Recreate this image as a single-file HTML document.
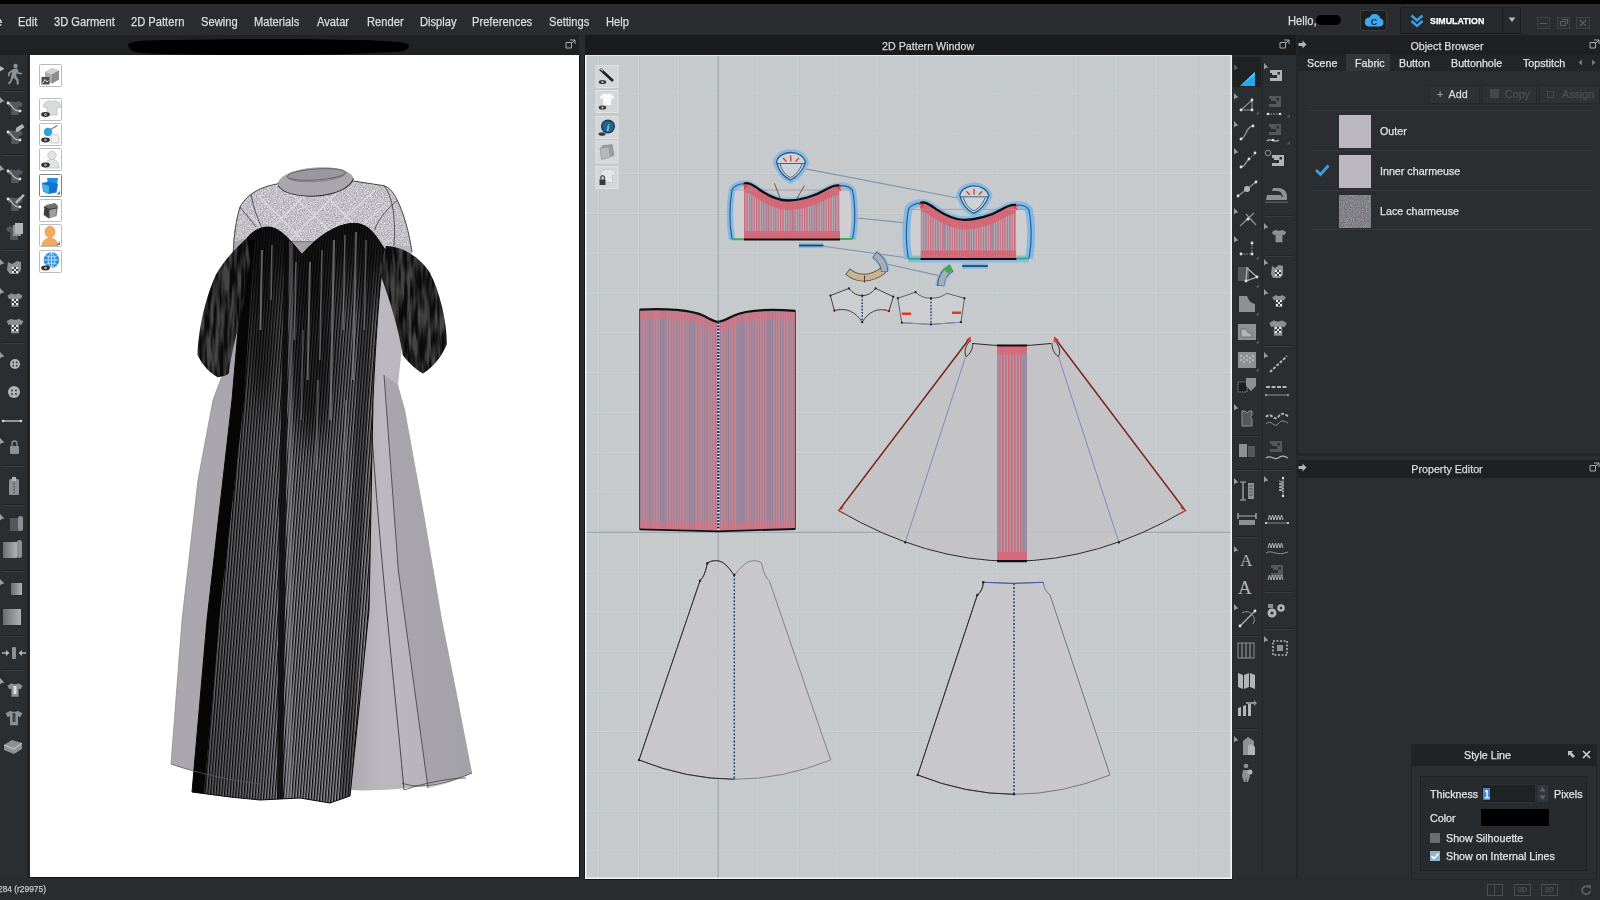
<!DOCTYPE html>
<html><head><meta charset="utf-8"><title>CLO</title>
<style>
*{box-sizing:border-box;margin:0;padding:0}
html,body{width:1600px;height:900px;overflow:hidden;background:#2a2d30;font-family:"Liberation Sans",sans-serif;font-size:12px;color:#dcdcdc}
#app{position:relative;width:1600px;height:900px;overflow:hidden;background:#2a2d30}
.abs{position:absolute}
.t{position:absolute;white-space:nowrap;line-height:14px;height:14px;transform:scaleX(.93);transform-origin:0 50%;-webkit-text-stroke:.25px currentColor}
.t[style*='text-align:center']{transform-origin:50% 50%}
#topblack{left:0;top:0;width:1600px;height:4px;background:#000}
#menubar{left:0;top:4px;width:1600px;height:31px;background:#2a2c2f}
.mi{position:absolute;top:14.500px;white-space:nowrap;line-height:14px;color:#dedede;font-size:12px;transform:scaleX(.93);transform-origin:0 50%;-webkit-text-stroke:.25px currentColor}
#titlerow{left:0;top:35px;width:1600px;height:20px;background:#1f2123}
#lefttb{left:0;top:55px;width:27px;height:823px;background:#2b2e31}
#v3d{left:30px;top:55px;width:549px;height:822px;background:#fff;box-shadow:1px 1px 0 #111}
#v2d{left:585px;top:55px;width:647px;height:824px;background:#c6cacc;box-shadow:0 1px 0 #111,1px 0 0 #111,-1px 0 0 #161718}
#status{left:0;top:880px;width:1600px;height:20px;background:#2a2d30}
.vb{position:absolute;width:23px;height:23px;border:1px solid #bcbcbc;background:#fdfdfd;border-radius:1.500px}
.vb2{position:absolute;width:22px;height:22px;border:1px solid #e6e9ea;background:#d6dadc}
</style></head><body>
<div id="app">
<div id="topblack" class="abs"></div>
<div id="menubar" class="abs"></div>
<div id="titlerow" class="abs"></div><div class="abs" style="left:579px;top:35px;width:6px;height:20px;background:#2a2d30"></div><div class="abs" style="left:585px;top:35px;width:711px;height:20px;background:#1a1b1d"></div>
<div id="lefttb" class="abs"></div>
<div id="v3d" class="abs"></div>
<div id="v2d" class="abs"></div>
<div id="status" class="abs"></div>
<div class="mi" style="left:-4.500px">e</div>
<div class="mi" style="left:18px">Edit</div>
<div class="mi" style="left:54px">3D Garment</div>
<div class="mi" style="left:131px">2D Pattern</div>
<div class="mi" style="left:201px">Sewing</div>
<div class="mi" style="left:254px">Materials</div>
<div class="mi" style="left:317px">Avatar</div>
<div class="mi" style="left:367px">Render</div>
<div class="mi" style="left:420px">Display</div>
<div class="mi" style="left:472px">Preferences</div>
<div class="mi" style="left:549px">Settings</div>
<div class="mi" style="left:606px">Help</div>
<div class="mi" style="left:1288px;top:13.500px">Hello,</div>
<div class="abs" style="left:1316px;top:15px;width:25px;height:10px;background:#000;border-radius:5px"></div>
<!-- cloud button -->
<div class="abs" style="left:1360px;top:10px;width:27px;height:21px;background:#1c1e20;border:1px solid #3a3d40;border-radius:3px"></div>
<svg class="abs" style="left:1363px;top:12px" width="22" height="17" viewBox="0 0 22 17"><path d="M5.5 14.5h11a4 4 0 0 0 .8-7.9A5.6 5.6 0 0 0 6.600 5.400 4.600 4.600 0 0 0 5.500 14.500z" fill="#3fa9f0"/><text x="11" y="12.500" font-family="Liberation Sans,sans-serif" font-size="9" font-weight="bold" fill="#1c2a38" text-anchor="middle">C</text></svg>
<!-- simulation button -->
<div class="abs" style="left:1400px;top:7px;width:121px;height:27px;background:#26292c;border:1px solid #1b1d1f;border-radius:2px"></div>
<div class="abs" style="left:1502px;top:8px;width:1px;height:25px;background:#1b1d1f"></div>
<svg class="abs" style="left:1410px;top:14px" width="14" height="14" viewBox="0 0 14 14"><path d="M1.5 1.500 7 6.500 12.500 1.500M1.500 7 7 12 12.500 7" fill="none" stroke="#3fa0e8" stroke-width="2.400"/></svg>
<div class="mi" style="left:1430px;top:13.500px;font-weight:bold;font-size:9.500px;color:#fff;letter-spacing:0px">SIMULATION</div>
<svg class="abs" style="left:1508px;top:17px" width="8" height="6"><path d="M0.500 0.500h7L4 5z" fill="#b8b8b8"/></svg>
<!-- window buttons -->
<div class="abs" style="left:1537px;top:17px;width:13px;height:12px;border:1px solid #3f4245;background:#2d3033"></div>
<div class="abs" style="left:1557px;top:17px;width:13px;height:12px;border:1px solid #3f4245;background:#2d3033"></div>
<div class="abs" style="left:1576px;top:17px;width:14px;height:12px;border:1px solid #3f4245;background:#2d3033"></div>
<div class="abs" style="left:1540px;top:23px;width:7px;height:1px;background:#5a5d60"></div>
<div class="abs" style="left:1560px;top:21px;width:6px;height:5px;border:1px solid #5a5d60"></div>
<div class="abs" style="left:1562px;top:19px;width:6px;height:5px;border:1px solid #5a5d60;border-left:none;border-bottom:none"></div>
<svg class="abs" style="left:1579px;top:19px" width="8" height="8"><path d="M1 1l6 6M7 1l-6 6" stroke="#5a5d60" stroke-width="1.200"/></svg>
<!-- 3D window title redaction -->
<svg class="abs" style="left:120px;top:35px;filter:blur(.6px)" width="300" height="20"><path d="M10 8c8-3 30-3 50-3l60-1 60 0 50 1c20 0 50 1 58 4 3 4-2 7-12 8l-50 2-50 1-70 0-60-1c-15 0-30-1-34-3-4-3-5-6-2-8z" fill="#000"/></svg>
<svg class="abs" style="left:565px;top:39px" width="11" height="10"><path d="M1 3.500h5.500v5.500h-5.500zM5 1h5v4M10 1l-4 4" fill="none" stroke="#aaa" stroke-width="1"/></svg>
<div class="t" style="left:882px;top:39px;color:#d8d8d8;font-size:11.500px">2D Pattern Window</div>
<svg class="abs" style="left:1279px;top:39px" width="11" height="10"><path d="M1 3.500h5.500v5.500h-5.500zM5 1h5v4M10 1l-4 4" fill="none" stroke="#aaa" stroke-width="1"/></svg>

<svg class="abs" style="left:0;top:55px" width="30" height="823" viewBox="0 55 30 823">
<rect x="27" y="55" width="3" height="823" fill="#212325"/>
<path d="M0.0 66.0l4.500 2.800-4.500 2.800z" fill="#b8babc"/>
<g fill="#8e9194"><circle cx="15.500" cy="66" r="2.200"/><path d="M13 69l4.500-.5 1.200 4 3.300.3v1.500l-4.500-.2-.8-1.500-.5 3.500 2.300 3.500.3 4.800h-2l-.5-4-2.800-3-1.800 4-2.500 3-1.400-1 2.600-3.200 1.300-6 .3-2.200-2 1.500-.4 2.800h-1.600l.3-3.800z"/></g>
<rect x="2.0" y="91.0" width="22.0" height="1" fill="#3a3d40"/><rect x="2.0" y="90.0" width="22.0" height="1" fill="#202224"/>
<path d="M0.0 97.0l0 6.500 1.800-1.600 2.600-.3z" fill="#9a9da0"/><path transform="translate(15.0,108.0) scale(1.00)" d="M-8-4.500l4.500-2.500c1.500 1.500 5.500 1.500 7 0l4.500 2.500-2 3.800-2.200-1v8.700h-7.600v-8.700l-2.200 1z" fill="#55585b"/><path d="M8 103.0c4 0 4 9 12 8" fill="none" stroke="#b2b4b6" stroke-width="1.300"/><circle cx="8.0" cy="103.0" r="1.4" fill="#e0e0e0"/><circle cx="20.0" cy="111.0" r="1.4" fill="#e0e0e0"/>
<path transform="translate(15.0,137.0) scale(1.00)" d="M-8-4.500l4.500-2.500c1.500 1.500 5.500 1.500 7 0l4.500 2.500-2 3.800-2.200-1v8.700h-7.600v-8.700l-2.200 1z" fill="#55585b"/><path d="M8 132.0c4 0 4 9 12 8" fill="none" stroke="#b2b4b6" stroke-width="1.300"/><circle cx="8.0" cy="132.0" r="1.4" fill="#e0e0e0"/><circle cx="20.0" cy="140.0" r="1.4" fill="#e0e0e0"/><path d="M16 128l6-4 2.500 3-6 4.500-3 .5z" fill="#b2b4b6"/>
<rect x="2.0" y="155.0" width="22.0" height="1" fill="#3a3d40"/><rect x="2.0" y="154.0" width="22.0" height="1" fill="#202224"/>
<path d="M0.0 165.0l0 6.500 1.800-1.600 2.600-.3z" fill="#9a9da0"/><path transform="translate(15.0,176.0) scale(1.00)" d="M-8-4.500l4.500-2.500c1.500 1.500 5.500 1.500 7 0l4.500 2.500-2 3.800-2.200-1v8.700h-7.600v-8.700l-2.200 1z" fill="#55585b"/><path d="M8 171.0c4 0 4 9 12 8" fill="none" stroke="#b2b4b6" stroke-width="1.300"/><circle cx="8.0" cy="171.0" r="1.4" fill="#e0e0e0"/><circle cx="20.0" cy="179.0" r="1.4" fill="#e0e0e0"/>
<path transform="translate(15.0,204.0) scale(1.00)" d="M-8-4.500l4.500-2.500c1.500 1.500 5.500 1.500 7 0l4.500 2.500-2 3.800-2.200-1v8.700h-7.600v-8.700l-2.200 1z" fill="#55585b"/><path d="M8 199.0c4 0 4 9 12 8" fill="none" stroke="#b2b4b6" stroke-width="1.300"/><circle cx="8.0" cy="199.0" r="1.4" fill="#e0e0e0"/><circle cx="20.0" cy="207.0" r="1.4" fill="#e0e0e0"/><path d="M15 202l8-8 1.800 1.800-8 8z" fill="#b2b4b6"/>
<path transform="translate(14.0,233.0) scale(1.00)" d="M-8-4.500l4.500-2.500c1.500 1.500 5.500 1.500 7 0l4.500 2.500-2 3.800-2.200-1v8.700h-7.600v-8.700l-2.200 1z" fill="#55585b"/><rect x="13" y="225" width="8" height="11" fill="#8e9194"/><rect x="15" y="223" width="8" height="11" fill="#b2b4b6"/>
<rect x="2.0" y="250.0" width="22.0" height="1" fill="#3a3d40"/><rect x="2.0" y="249.0" width="22.0" height="1" fill="#202224"/>
<path d="M0.0 259.0l0 6.500 1.800-1.600 2.600-.3z" fill="#9a9da0"/><path d="M8 262l4 2 5-3 4 1v8l-3 4h-8l-3-4z" fill="#8e9194"/><rect x="12.0" y="267.0" width="2" height="2" fill="#e6e6e6"/><rect x="12.0" y="269.0" width="2" height="2" fill="#3a3d40"/><rect x="12.0" y="271.0" width="2" height="2" fill="#e6e6e6"/><rect x="14.0" y="267.0" width="2" height="2" fill="#3a3d40"/><rect x="14.0" y="269.0" width="2" height="2" fill="#e6e6e6"/><rect x="14.0" y="271.0" width="2" height="2" fill="#3a3d40"/><rect x="16.0" y="267.0" width="2" height="2" fill="#e6e6e6"/><rect x="16.0" y="269.0" width="2" height="2" fill="#3a3d40"/><rect x="16.0" y="271.0" width="2" height="2" fill="#e6e6e6"/>
<path d="M0.0 288.0l0 6.500 1.800-1.600 2.600-.3z" fill="#9a9da0"/><path transform="translate(15.0,300.0) scale(0.95)" d="M-8-4.500l4.500-2.500c1.500 1.500 5.500 1.500 7 0l4.500 2.500-2 3.800-2.200-1v8.700h-7.600v-8.700l-2.200 1z" fill="#8e9194"/><rect x="12.0" y="299.0" width="2" height="2" fill="#e6e6e6"/><rect x="12.0" y="301.0" width="2" height="2" fill="#3a3d40"/><rect x="12.0" y="303.0" width="2" height="2" fill="#e6e6e6"/><rect x="14.0" y="299.0" width="2" height="2" fill="#3a3d40"/><rect x="14.0" y="301.0" width="2" height="2" fill="#e6e6e6"/><rect x="14.0" y="303.0" width="2" height="2" fill="#3a3d40"/><rect x="16.0" y="299.0" width="2" height="2" fill="#e6e6e6"/><rect x="16.0" y="301.0" width="2" height="2" fill="#3a3d40"/><rect x="16.0" y="303.0" width="2" height="2" fill="#e6e6e6"/>
<path transform="translate(15.0,326.0) scale(1.05)" d="M-8-4.500l4.500-2.500c1.500 1.500 5.500 1.500 7 0l4.500 2.500-2 3.800-2.200-1v8.700h-7.600v-8.700l-2.200 1z" fill="#8e9194"/><rect x="12.0" y="325.0" width="2" height="2" fill="#e6e6e6"/><rect x="12.0" y="327.0" width="2" height="2" fill="#3a3d40"/><rect x="12.0" y="329.0" width="2" height="2" fill="#e6e6e6"/><rect x="14.0" y="325.0" width="2" height="2" fill="#3a3d40"/><rect x="14.0" y="327.0" width="2" height="2" fill="#e6e6e6"/><rect x="14.0" y="329.0" width="2" height="2" fill="#3a3d40"/><rect x="16.0" y="325.0" width="2" height="2" fill="#e6e6e6"/><rect x="16.0" y="327.0" width="2" height="2" fill="#3a3d40"/><rect x="16.0" y="329.0" width="2" height="2" fill="#e6e6e6"/>
<rect x="2.0" y="343.0" width="22.0" height="1" fill="#3a3d40"/><rect x="2.0" y="342.0" width="22.0" height="1" fill="#202224"/>
<path d="M0.0 352.0l0 6.500 1.800-1.600 2.600-.3z" fill="#9a9da0"/><circle cx="15" cy="364" r="5" fill="#b2b4b6"/><circle cx="13.300" cy="362.500" r="0.900" fill="#333"/><circle cx="16.700" cy="362.500" r="0.900" fill="#333"/><circle cx="13.300" cy="365.700" r="0.900" fill="#333"/><circle cx="16.700" cy="365.700" r="0.900" fill="#333"/>
<circle cx="14" cy="392" r="6" fill="#b2b4b6"/><circle cx="12" cy="390.500" r="0.900" fill="#333"/><circle cx="16" cy="390.500" r="0.900" fill="#333"/><circle cx="12" cy="394" r="0.900" fill="#333"/><circle cx="16" cy="394" r="0.900" fill="#333"/>
<path d="M3 421h18" stroke="#b2b4b6" stroke-width="1.600"/><circle cx="3.0" cy="421.0" r="1.2" fill="#e0e0e0"/><circle cx="21.0" cy="421.0" r="1.2" fill="#e0e0e0"/>
<path d="M0.0 438.0l0 6.500 1.800-1.600 2.600-.3z" fill="#9a9da0"/><rect x="10" y="446" width="9" height="8" rx="1" fill="#8e9194"/><path d="M12 446v-2.500a2.500 2.500 0 0 1 5 0V446" fill="none" stroke="#8e9194" stroke-width="1.300"/>
<rect x="2.0" y="466.0" width="22.0" height="1" fill="#3a3d40"/><rect x="2.0" y="465.0" width="22.0" height="1" fill="#202224"/>
<rect x="9" y="479" width="10" height="16" rx="1.500" fill="#8e9194"/><path d="M14 480v14" stroke="#333" stroke-width="1" stroke-dasharray="1.500 1.500"/><rect x="12" y="477" width="4" height="4" fill="#b2b4b6"/>
<rect x="2.0" y="505.0" width="22.0" height="1" fill="#3a3d40"/><rect x="2.0" y="504.0" width="22.0" height="1" fill="#202224"/>
<path d="M0.0 514.0l0 6.500 1.800-1.600 2.600-.3z" fill="#9a9da0"/><rect x="10" y="518" width="11" height="13" fill="#55585b"/><rect x="18" y="516" width="5" height="15" rx="2.500" fill="#8e9194"/>
<defs><linearGradient id="lg1" x1="0" y1="0" x2="1" y2="0"><stop offset="0" stop-color="#6a6d70"/><stop offset="1" stop-color="#b0b2b4"/></linearGradient></defs>
<rect x="3" y="542" width="14" height="16" fill="url(#lg1)"/><rect x="17" y="540" width="5" height="18" rx="2.500" fill="#8e9194"/>
<rect x="2.0" y="571.0" width="22.0" height="1" fill="#3a3d40"/><rect x="2.0" y="570.0" width="22.0" height="1" fill="#202224"/>
<path d="M0.0 579.0l0 6.500 1.800-1.600 2.600-.3z" fill="#9a9da0"/><rect x="11" y="583" width="11" height="12" fill="url(#lg1)"/>
<rect x="3" y="609" width="18" height="16" fill="url(#lg1)"/>
<rect x="2.0" y="636.0" width="22.0" height="1" fill="#3a3d40"/><rect x="2.0" y="635.0" width="22.0" height="1" fill="#202224"/>
<path d="M2 653h5M26 653h-5" stroke="#b2b4b6" stroke-width="1.400"/><path d="M6 650l3.500 3-3.500 3zM22 650l-3.500 3 3.500 3z" fill="#b2b4b6"/><rect x="12" y="647" width="4" height="12" rx="1" fill="#8e9194"/>
<rect x="2.0" y="670.0" width="22.0" height="1" fill="#3a3d40"/><rect x="2.0" y="669.0" width="22.0" height="1" fill="#202224"/>
<path d="M0.0 678.0l0 6.500 1.800-1.600 2.600-.3z" fill="#9a9da0"/><path transform="translate(15.0,690.0) scale(0.95)" d="M-8-4.500l4.500-2.500c1.500 1.500 5.500 1.500 7 0l4.500 2.500-2 3.800-2.200-1v8.700h-7.600v-8.700l-2.200 1z" fill="#8e9194"/><rect x="13.500" y="686" width="3" height="8" fill="#ddd"/>
<path transform="translate(14.0,718.0) scale(1.05)" d="M-8-4.500l4.500-2.500c1.500 1.500 5.500 1.500 7 0l4.500 2.500-2 3.800-2.200-1v8.700h-7.600v-8.700l-2.200 1z" fill="#8e9194"/><rect x="12.500" y="713" width="3" height="9" fill="#444"/>
<path d="M4 745l8-5 10 3v6l-8 5-10-4z" fill="#8e9194"/><path d="M4 745l10 4 8-6" stroke="#ddd" stroke-width="0.800" fill="none"/>
</svg>
<svg class="abs" style="left:30px;top:55px" width="548" height="823" viewBox="30 55 548 823">
<defs>
<pattern id="plt" width="2.800" height="8" patternUnits="userSpaceOnUse" patternTransform="rotate(4.500)"><rect width="2.800" height="8" fill="#939196"/><rect width="1.350" height="8" fill="#0a0a0a"/></pattern>
<pattern id="plt2" width="3" height="8" patternUnits="userSpaceOnUse" patternTransform="rotate(4)"><rect width="3" height="8" fill="#0a0a0a"/><rect width="0.800" height="8" fill="#77757a"/></pattern>
<linearGradient id="gtop" x1="0" y1="0" x2="0" y2="1"><stop offset="0" stop-color="#050505" stop-opacity=".92"/><stop offset=".07" stop-color="#050505" stop-opacity=".78"/><stop offset=".17" stop-color="#050505" stop-opacity=".32"/><stop offset=".4" stop-color="#050505" stop-opacity=".1"/><stop offset=".6" stop-color="#050505" stop-opacity="0"/></linearGradient>
<filter id="b6" x="-50%" y="-20%" width="200%" height="140%"><feGaussianBlur stdDeviation="7 18"/></filter>
<linearGradient id="gsheer" x1="0" y1="0" x2="1" y2="0"><stop offset="0" stop-color="#aaa7ae"/><stop offset=".55" stop-color="#a5a2a9"/><stop offset=".7" stop-color="#bbb8bf"/><stop offset="1" stop-color="#b3b0b7"/></linearGradient>
<filter id="lace" x="0" y="0" width="100%" height="100%"><feTurbulence type="fractalNoise" baseFrequency="0.850" numOctaves="2" seed="5"/><feColorMatrix type="matrix" values="0 0 0 0 1  0 0 0 0 1  0 0 0 0 1  1.600 1.600 1.600 0 -1.900"/></filter>
<filter id="rough" x="-5%" y="-5%" width="110%" height="110%"><feTurbulence type="fractalNoise" baseFrequency="0.250 0.030" numOctaves="2" seed="9"/><feColorMatrix type="matrix" values="0 0 0 0 .62  0 0 0 0 .61  0 0 0 0 .64  2.200 2.200 0 0 -1.750"/></filter>
<linearGradient id="gleft" gradientUnits="userSpaceOnUse" x1="200" y1="0" x2="285" y2="0"><stop offset="0" stop-color="#050505" stop-opacity=".4"/><stop offset=".7" stop-color="#050505" stop-opacity=".18"/><stop offset="1" stop-color="#050505" stop-opacity="0"/></linearGradient>
</defs>
<path d="M278.700 183.700C265 186 249 191 240 207C236 220 234 235 233 256L222 376L213 400L198 480L182 620L171 764C200 774 230 780 260 784L350 790C390 792 440 786 472 773L456 690L442 620L425 520L405 410L398 385L412 252C409 232 404 214 397.300 200.300C394 193 390 188 384 185.700L353.300 181Z" fill="url(#gsheer)"/>
<path d="M384 375L398.300 570L428 788C445 785 460 779 472 773L456 690L442 620L425 520L405 410L398 385Z" fill="#8f8c94" opacity=".42"/>
<path d="M371 420C380 560 396 700 404 790" fill="none" stroke="#3a393c" stroke-width="0.900"/>
<path d="M384 375L398.300 570L428 788" fill="none" stroke="#4a484f" stroke-width="0.900"/>
<path d="M402 783C420 790 446 784 472 773M404 790C424 783 450 778 466 778" fill="none" stroke="#444" stroke-width="0.800"/>
<path d="M278.700 183.700C265 186 249 191 240 207C236 220 234 232 233.500 242L247 238C252 232 259 227.500 267.300 227C280 227 290 240 302 254.400C314 240 335 223 355.200 223.300C365 224 372 230 377.200 238L386 247L411 246C408 228 403 212 397.300 200.300C394 193 390 188 384 185.700L353.300 181C345 192 330 196 315 196C300 196 285 192 278.700 183.700Z" fill="#aeabb3"/>
<clipPath id="cy"><path d="M278.700 183.700C265 186 249 191 240 207C236 220 234 232 233.500 242L247 238C252 232 259 227.500 267.300 227C276 227 283 234 289 241.700H318.700C330 231 343 223 355.200 223.300C365 224 372 230 377.200 238L386 247L411 246C408 228 403 212 397.300 200.300C394 193 390 188 384 185.700L353.300 181C345 192 330 196 315 196C300 196 285 192 278.700 183.700Z"/></clipPath>
<g clip-path="url(#cy)"><rect x="230" y="178" width="185" height="82" fill="#a9a6ae"/><rect x="230" y="178" width="185" height="82" filter="url(#lace)" opacity=".6"/><path d="M250 250L310 190M275 255L345 185M305 255L375 190M335 250L385 205M380 250L320 190M350 250L285 188M320 258L258 195M290 258L250 215" stroke="#e4e2e8" stroke-width="1.600" opacity=".6" fill="none"/></g>
<path d="M289 241.700C293 246 297 250 302 254.400C307 249 312 245 318.700 241.700Z" fill="#a3a0a7"/><path d="M289 241.700H318.700" stroke="#55535a" stroke-width="0.700"/>
<g transform="rotate(-4 316 180)">
<ellipse cx="315.600" cy="181.500" rx="38" ry="14" fill="#aaa7ad"/>
<path d="M287 174.500C287 170 300 168 316.500 168C333 168 346.500 170.500 347 175L353.500 181C350 190 335 196 315.500 196C296 196 281 190 278 183Z" fill="#a9a6ac"/>
<ellipse cx="316.800" cy="174.500" rx="29" ry="5.500" fill="#9a979e"/>
<path d="M287 174.500C289 179 301 181.500 316.800 181.500C332 181.500 345 179 347 174.500" fill="none" stroke="#77747b" stroke-width="0.800"/>
<ellipse cx="316.800" cy="174.500" rx="29" ry="5.500" fill="none" stroke="#4c4b4e" stroke-width="0.700"/>
<path d="M278 183C281 190 296 196 315.500 196C335 196 350 190 353.500 181" fill="none" stroke="#2c2b2e" stroke-width="1"/>
</g>
<path d="M278.700 183.700C265 186 249 191 240 207C236 220 234 235 233 256M353.300 181L384 185.700C390 188 394 193 397.300 200.300C404 214 409 232 412 252" fill="none" stroke="#3b3a3e" stroke-width="0.900"/>
<path d="M240 207C246 215 252 221 256 227M397.300 200.300C388 208 379 218 374.700 229.700M251 194C253 206 257 218 262 228M384 185.700C392 196 396 215 394 246" fill="none" stroke="#3b3a3e" stroke-width="0.800"/>
<path d="M247 238C252 232 259 227.500 267.300 227C280 227 290 240 302 254.400C314 240 335 223 355.200 223.300C365 224 372 230 377.200 238L384.500 249C380 280 376 330 373 400L369 610L350 796L330 803L300 798L260 800L230 797L192 792L207 620L232 400L238 330Z" fill="url(#plt)"/>
<clipPath id="cbody"><path d="M247 238C252 232 259 227.500 267.300 227C280 227 290 240 302 254.400C314 240 335 223 355.200 223.300C365 224 372 230 377.200 238L384.500 249C380 280 376 330 373 400L369 610L350 796L330 803L300 798L260 800L230 797L192 792L207 620L232 400L238 330Z"/></clipPath>
<g clip-path="url(#cbody)">
<rect x="180" y="220" width="220" height="600" fill="url(#gtop)"/>
<rect x="180" y="220" width="220" height="600" fill="url(#gleft)"/>
<ellipse cx="312" cy="350" rx="24" ry="95" fill="#050505" opacity=".6" filter="url(#b6)"/>
<ellipse cx="262" cy="330" rx="14" ry="80" fill="#050505" opacity=".5" filter="url(#b6)"/>
<path d="M240 240L232 400L207 620L192 792L204 794L219 620L244 400L254 240Z" fill="#060606"/>
<path d="M285 236L279 500L277 800L283 800L286 500L289 236Z" fill="#0a0a0a" opacity=".85"/>
<path d="M289 236L286 800L292 800L293 236Z" fill="#9a989d" opacity=".35"/>
<path d="M362 250L340 806L352 806L374 250Z" fill="#0a0a0a" opacity=".35"/>
<path d="M262.0 250.0L260.4 330.0" stroke="#a5a3a8" stroke-width="2.0" opacity="0.55"/>
<path d="M272.0 245.0L270.9 300.0" stroke="#a5a3a8" stroke-width="1.5" opacity="0.50"/>
<path d="M296.0 262.0L294.4 340.0" stroke="#a5a3a8" stroke-width="1.5" opacity="0.50"/>
<path d="M310.0 262.0L307.6 380.0" stroke="#a5a3a8" stroke-width="2.0" opacity="0.55"/>
<path d="M322.0 250.0L319.8 360.0" stroke="#a5a3a8" stroke-width="1.5" opacity="0.50"/>
<path d="M334.0 240.0L330.4 420.0" stroke="#a5a3a8" stroke-width="2.2" opacity="0.55"/>
<path d="M345.0 235.0L343.1 330.0" stroke="#a5a3a8" stroke-width="1.5" opacity="0.50"/>
<path d="M356.0 232.0L353.0 380.0" stroke="#a5a3a8" stroke-width="2.0" opacity="0.50"/>
<path d="M366.0 240.0L364.2 330.0" stroke="#a5a3a8" stroke-width="1.5" opacity="0.45"/>
<path d="M318.0 380.0L316.2 470.0" stroke="#a5a3a8" stroke-width="2.0" opacity="0.40"/>
<path d="M346.0 400.0L343.6 520.0" stroke="#a5a3a8" stroke-width="2.0" opacity="0.35"/>
<path d="M303.0 330.0L301.2 420.0" stroke="#a5a3a8" stroke-width="1.5" opacity="0.40"/>
</g>
<path d="M247 238C252 232 259 227.500 267.300 227C280 227 290 240 302 254.400C314 240 335 223 355.200 223.300C365 224 372 230 377.200 238L384.500 249C380 280 376 330 373 400L369 610L350 796L330 803L300 798L260 800L230 797L192 792L207 620L232 400L238 330Z" fill="none" stroke="#0a0a0a" stroke-width="1"/>
<path d="M247 238C238 246 224 260 216 274.600C206 296 198 330 197.600 355.200C203 366 210 373 217.800 377.200C222 377 226 375.500 228.800 373.500C231 355 236 335 241.600 315L250 262Z" fill="#0b0b0b"/>
<clipPath id="cls"><path d="M247 238C238 246 224 260 216 274.600C206 296 198 330 197.600 355.200C203 366 210 373 217.800 377.200C222 377 226 375.500 228.800 373.500C231 355 236 335 241.600 315L250 262Z"/></clipPath>
<path d="M386 246C398 246 412 253 420 261C424 265 427 268 429.500 272C440 292 447 322 446.800 344.200C441 358 432 368 423 373.500C415 369 408 362 402.800 355.200C399 330 390 300 379 271Z" fill="#0b0b0b"/>
<clipPath id="crs"><path d="M386 246C398 246 412 253 420 261C424 265 427 268 429.500 272C440 292 447 322 446.800 344.200C441 358 432 368 423 373.500C415 369 408 362 402.800 355.200C399 330 390 300 379 271Z"/></clipPath>
<g clip-path="url(#cls)"><rect x="190" y="235" width="65" height="150" filter="url(#rough)" opacity=".3"/></g>
<g clip-path="url(#crs)"><rect x="375" y="245" width="75" height="135" filter="url(#rough)" opacity=".3"/></g>
<path d="M171 764C200 774 230 780 260 784" fill="none" stroke="#5a585c" stroke-width="0.800"/>
<path d="M222 376L213 400L198 480L182 620L171 764" fill="none" stroke="#8a888d" stroke-width="0.700"/>
</svg>
<div class="vb" style="left:39px;top:64px"></div>
<svg class="abs" style="left:40px;top:65px" width="21" height="21" viewBox="0 0 21 21"><path d="M5 7l7-4 7 2.500v9l-7 4-7-2.500z" fill="#a9acaf"/><path d="M5 7l7 2.500 7-4-7-2.500z" fill="#cfd1d3"/><path d="M12 9.500v9l7-4v-9z" fill="#8b8e91"/><path d="M1.500 12h8v7.500h-8z" fill="#4a4d50"/><path d="M2.500 18.500l2.500-4 2 2.500 1.500-1.500" stroke="#e4e4e4" stroke-width="1" fill="none"/></svg>
<div class="vb" style="left:39px;top:97.5px"></div>
<svg class="abs" style="left:40px;top:98.5px" width="21" height="21" viewBox="0 0 21 21"><path d="M5 3.500l4-2c1.200 1.200 4.800 1.200 6 0l4 2 2 4-3 1.500-1-1V16H7V8l-1 1-3-1.500z" fill="#d9dbdd" stroke="#b3b5b7" stroke-width="0.600"/><ellipse cx="5.500" cy="15.5" rx="4.300" ry="2.400" fill="#2e2e30"/><circle cx="5.500" cy="15.5" r="1.200" fill="#e8e8e8"/><circle cx="5.500" cy="15.5" r="0.600" fill="#222"/></svg>
<div class="vb" style="left:39px;top:123px"></div>
<svg class="abs" style="left:40px;top:124px" width="21" height="21" viewBox="0 0 21 21"><circle cx="8" cy="8" r="4.200" fill="#2aa3dc"/><path d="M10.500 5.500l7-4" stroke="#777" stroke-width="1.300"/><path d="M11 12l2-2 2 1 2-1 2 2v7h-8z" fill="#eef0f1" stroke="#c6a8a8" stroke-width="0.600"/><ellipse cx="5.500" cy="16" rx="4.300" ry="2.400" fill="#2e2e30"/><circle cx="5.500" cy="16" r="1.200" fill="#e8e8e8"/><circle cx="5.500" cy="16" r="0.600" fill="#222"/></svg>
<div class="vb" style="left:39px;top:148px"></div>
<svg class="abs" style="left:40px;top:149px" width="21" height="21" viewBox="0 0 21 21"><circle cx="12" cy="6.500" r="4.200" fill="#e0e2e4" stroke="#b0b2b4" stroke-width="0.600"/><path d="M5 19c0-6 3-8.500 7-8.500s7 2.500 7 8.500z" fill="#e0e2e4" stroke="#b0b2b4" stroke-width="0.600"/><ellipse cx="5.500" cy="16" rx="4.300" ry="2.400" fill="#2e2e30"/><circle cx="5.500" cy="16" r="1.200" fill="#e8e8e8"/><circle cx="5.500" cy="16" r="0.600" fill="#222"/></svg>
<div class="vb" style="left:39px;top:173.5px;border-color:#7f8183"></div>
<svg class="abs" style="left:40px;top:174.5px" width="21" height="21" viewBox="0 0 21 21"><path d="M7 3h11l-1.500 9H8.500z" fill="#1c8fe8"/><path d="M2 8l7-1.500 9 2.500-1.500 8.500-8 1.500-5.500-2.500z" fill="#1274cc"/><path d="M3 9l6 2v7.500L3 16z" fill="#46b0f6"/><path d="M20 16l-3.500 3.500H20z" fill="#777"/></svg>
<div class="vb" style="left:39px;top:199px"></div>
<svg class="abs" style="left:40px;top:200px" width="21" height="21" viewBox="0 0 21 21"><path d="M6 5l9-2 3 3-1.500 10-8 2.500-5-3.500 1-8z" fill="#6d7073"/><path d="M4 7l5 2.500 8-1.500M9 9.500V18" stroke="#2c2e30" stroke-width="1.100" fill="none"/><path d="M4.500 8l4 2v7.500L4 14.500z" fill="#3a3d40"/><path d="M9.500 10l7-1.500-1 7.500-6 2z" fill="#9da0a3"/></svg>
<div class="vb" style="left:39px;top:224px"></div>
<svg class="abs" style="left:40px;top:225px" width="21" height="21" viewBox="0 0 21 21"><ellipse cx="10" cy="7" rx="5" ry="5.800" fill="#f4aa62" stroke="#d58a3e" stroke-width="0.600"/><path d="M2 21c0-5 3.500-7 6-7.500h4c2.500.5 6 2.500 6 7.500z" fill="#f4aa62" stroke="#d58a3e" stroke-width="0.600"/><path d="M20 16.500l-3.500 3.500H20z" fill="#777"/></svg>
<div class="vb" style="left:39px;top:249.5px"></div>
<svg class="abs" style="left:40px;top:250.5px" width="21" height="21" viewBox="0 0 21 21"><circle cx="11.500" cy="9" r="7.800" fill="#2c8fdc"/><path d="M3.700 9h15.600M11.500 1.200v15.600M5.500 4.500c3.500 2 8.500 2 12 0M5.500 13.500c3.500-2 8.500-2 12 0M11.500 1.200c-4.500 3.500-4.500 12 0 15.600M11.500 1.200c4.500 3.500 4.500 12 0 15.600" stroke="#d8ecfb" stroke-width="0.800" fill="none"/><ellipse cx="5.500" cy="17" rx="4.300" ry="2.400" fill="#2e2e30"/><circle cx="5.500" cy="17" r="1.200" fill="#e8e8e8"/><circle cx="5.500" cy="17" r="0.600" fill="#222"/></svg>
<svg class="abs" style="left:585px;top:55px" width="647" height="824" viewBox="585 55 647 824">
<defs>
<pattern id="pl" width="2.600" height="10" patternUnits="userSpaceOnUse"><rect width="2.600" height="10" fill="#c58793"/><rect x="0" width="1" height="10" fill="#94809a"/></pattern>
<pattern id="pl2" width="3" height="10" patternUnits="userSpaceOnUse"><rect width="3" height="10" fill="#d4909c"/><rect x="0" width="1.500" height="10" fill="#cf6c7c"/><rect x="1.500" width="0.700" height="10" fill="#8d8a9e"/></pattern>
<pattern id="pl3" width="2.400" height="10" patternUnits="userSpaceOnUse"><rect x="0" width="1.300" height="10" fill="#d36675"/><rect x="1.300" width="0.600" height="10" fill="#85839a"/></pattern>
<filter id="bl1"><feGaussianBlur stdDeviation="1.200"/></filter>
</defs>
<rect x="585" y="55" width="647" height="824" fill="#c6cacc"/>
<path d="M598.7 55V879" stroke="#cdd1d3" stroke-width="1"/><path d="M599.7 55V879" stroke="#bcc0c2" stroke-width="0.500"/>
<path d="M638.5 55V879" stroke="#cdd1d3" stroke-width="1"/><path d="M639.5 55V879" stroke="#bcc0c2" stroke-width="0.500"/>
<path d="M678.4 55V879" stroke="#cdd1d3" stroke-width="1"/><path d="M679.4 55V879" stroke="#bcc0c2" stroke-width="0.500"/>
<path d="M758.1 55V879" stroke="#cdd1d3" stroke-width="1"/><path d="M759.1 55V879" stroke="#bcc0c2" stroke-width="0.500"/>
<path d="M797.9 55V879" stroke="#cdd1d3" stroke-width="1"/><path d="M798.9 55V879" stroke="#bcc0c2" stroke-width="0.500"/>
<path d="M837.8 55V879" stroke="#cdd1d3" stroke-width="1"/><path d="M838.8 55V879" stroke="#bcc0c2" stroke-width="0.500"/>
<path d="M877.6 55V879" stroke="#cdd1d3" stroke-width="1"/><path d="M878.6 55V879" stroke="#bcc0c2" stroke-width="0.500"/>
<path d="M917.5 55V879" stroke="#cdd1d3" stroke-width="1"/><path d="M918.5 55V879" stroke="#bcc0c2" stroke-width="0.500"/>
<path d="M957.3 55V879" stroke="#cdd1d3" stroke-width="1"/><path d="M958.3 55V879" stroke="#bcc0c2" stroke-width="0.500"/>
<path d="M997.2 55V879" stroke="#cdd1d3" stroke-width="1"/><path d="M998.2 55V879" stroke="#bcc0c2" stroke-width="0.500"/>
<path d="M1037.0 55V879" stroke="#cdd1d3" stroke-width="1"/><path d="M1038.0 55V879" stroke="#bcc0c2" stroke-width="0.500"/>
<path d="M1076.9 55V879" stroke="#cdd1d3" stroke-width="1"/><path d="M1077.9 55V879" stroke="#bcc0c2" stroke-width="0.500"/>
<path d="M1116.7 55V879" stroke="#cdd1d3" stroke-width="1"/><path d="M1117.7 55V879" stroke="#bcc0c2" stroke-width="0.500"/>
<path d="M1156.6 55V879" stroke="#cdd1d3" stroke-width="1"/><path d="M1157.6 55V879" stroke="#bcc0c2" stroke-width="0.500"/>
<path d="M1196.4 55V879" stroke="#cdd1d3" stroke-width="1"/><path d="M1197.4 55V879" stroke="#bcc0c2" stroke-width="0.500"/>
<path d="M586 93.9H1232" stroke="#cdd1d3" stroke-width="1"/><path d="M586 94.9H1232" stroke="#bcc0c2" stroke-width="0.500"/>
<path d="M586 133.8H1232" stroke="#cdd1d3" stroke-width="1"/><path d="M586 134.8H1232" stroke="#bcc0c2" stroke-width="0.500"/>
<path d="M586 173.6H1232" stroke="#cdd1d3" stroke-width="1"/><path d="M586 174.6H1232" stroke="#bcc0c2" stroke-width="0.500"/>
<path d="M586 213.5H1232" stroke="#cdd1d3" stroke-width="1"/><path d="M586 214.5H1232" stroke="#bcc0c2" stroke-width="0.500"/>
<path d="M586 253.3H1232" stroke="#cdd1d3" stroke-width="1"/><path d="M586 254.3H1232" stroke="#bcc0c2" stroke-width="0.500"/>
<path d="M586 293.2H1232" stroke="#cdd1d3" stroke-width="1"/><path d="M586 294.2H1232" stroke="#bcc0c2" stroke-width="0.500"/>
<path d="M586 333.0H1232" stroke="#cdd1d3" stroke-width="1"/><path d="M586 334.0H1232" stroke="#bcc0c2" stroke-width="0.500"/>
<path d="M586 372.9H1232" stroke="#cdd1d3" stroke-width="1"/><path d="M586 373.9H1232" stroke="#bcc0c2" stroke-width="0.500"/>
<path d="M586 412.7H1232" stroke="#cdd1d3" stroke-width="1"/><path d="M586 413.7H1232" stroke="#bcc0c2" stroke-width="0.500"/>
<path d="M586 452.6H1232" stroke="#cdd1d3" stroke-width="1"/><path d="M586 453.6H1232" stroke="#bcc0c2" stroke-width="0.500"/>
<path d="M586 492.4H1232" stroke="#cdd1d3" stroke-width="1"/><path d="M586 493.4H1232" stroke="#bcc0c2" stroke-width="0.500"/>
<path d="M586 572.1H1232" stroke="#cdd1d3" stroke-width="1"/><path d="M586 573.1H1232" stroke="#bcc0c2" stroke-width="0.500"/>
<path d="M586 612.0H1232" stroke="#cdd1d3" stroke-width="1"/><path d="M586 613.0H1232" stroke="#bcc0c2" stroke-width="0.500"/>
<path d="M586 651.8H1232" stroke="#cdd1d3" stroke-width="1"/><path d="M586 652.8H1232" stroke="#bcc0c2" stroke-width="0.500"/>
<path d="M586 691.7H1232" stroke="#cdd1d3" stroke-width="1"/><path d="M586 692.7H1232" stroke="#bcc0c2" stroke-width="0.500"/>
<path d="M586 731.5H1232" stroke="#cdd1d3" stroke-width="1"/><path d="M586 732.5H1232" stroke="#bcc0c2" stroke-width="0.500"/>
<path d="M586 771.4H1232" stroke="#cdd1d3" stroke-width="1"/><path d="M586 772.4H1232" stroke="#bcc0c2" stroke-width="0.500"/>
<path d="M586 811.2H1232" stroke="#cdd1d3" stroke-width="1"/><path d="M586 812.2H1232" stroke="#bcc0c2" stroke-width="0.500"/>
<path d="M586 851.1H1232" stroke="#cdd1d3" stroke-width="1"/><path d="M586 852.1H1232" stroke="#bcc0c2" stroke-width="0.500"/>
<path d="M718.200 55V879M586 532.300H1232" stroke="#9a9fa2" stroke-width="1"/>
<path d="M585.700 55V879M1231.300 55V879M585 878.200H1232" stroke="#f2f4f5" stroke-width="1.600" fill="none"/><path d="M585 55.500H1232" stroke="#e3e6e7" stroke-width="1" fill="none"/>
<g>
<path d="M639.6 309.6C665 308 692 310 704 316C710 319 714 321.800 718.300 321.800C722.500 321.800 727 319 733 316C745 310 770 309 795.400 310.800L795.400 529L718.300 531.300L639.600 529.300Z" fill="url(#pl)"/>
<clipPath id="cC"><path d="M639.6 309.6C665 308 692 310 704 316C710 319 714 321.800 718.300 321.800C722.500 321.800 727 319 733 316C745 310 770 309 795.400 310.800L795.400 529L718.300 531.300L639.600 529.300Z"/></clipPath>
<g clip-path="url(#cC)">
<rect x="647.5" y="305" width="5.0" height="230" fill="#8488a0" opacity="0.30"/>
<rect x="660.0" y="305" width="6.0" height="230" fill="#8488a0" opacity="0.60"/>
<rect x="688.5" y="305" width="7.0" height="230" fill="#8488a0" opacity="0.60"/>
<rect x="737.5" y="305" width="7.0" height="230" fill="#8488a0" opacity="0.60"/>
<rect x="750.0" y="305" width="4.0" height="230" fill="#8488a0" opacity="0.30"/>
<rect x="767.0" y="305" width="6.0" height="230" fill="#8488a0" opacity="0.60"/>
<rect x="780.0" y="305" width="4.0" height="230" fill="#8488a0" opacity="0.24"/>
<rect x="704.0" y="305" width="4.0" height="230" fill="#8488a0" opacity="0.24"/>
<rect x="726.0" y="305" width="4.0" height="230" fill="#8488a0" opacity="0.30"/>
<path d="M639.6 309.6C665 308 692 310 704 316C710 319 714 321.800 718.300 321.800C722.500 321.800 727 319 733 316C745 310 770 309 795.400 310.800" transform="translate(0,5.500)" fill="none" stroke="#dc7080" stroke-width="9" opacity=".55"/>
<path d="M639 525L718.300 527L796 525" fill="none" stroke="#dc7080" stroke-width="9" opacity=".55"/>
</g>
<path d="M639.600 309.600V529.300M795.400 310.800V529" stroke="#5a3a44" stroke-width="1" fill="none"/>
<path d="M639.6 309.6C665 308 692 310 704 316C710 319 714 321.800 718.300 321.800C722.500 321.800 727 319 733 316C745 310 770 309 795.400 310.800" fill="none" stroke="#111" stroke-width="2.200"/>
<path d="M639.600 529.300L718.300 531.300L795.400 529" fill="none" stroke="#111" stroke-width="1.800"/>
<path d="M718.300 322V531" stroke="#dfe6f0" stroke-width="2.400"/><path d="M718.300 322V531" stroke="#1a3566" stroke-width="2.400" stroke-dasharray="2 1.300"/>
</g>
<g>
<path d="M969.300 338.800L973 343.500Q1012 348 1051 343.500L1055.400 338.800L1185.300 510.600Q1012 611.800 838.800 510.600Z" fill="#c4c3c6" fill-opacity=".88"/>
<path d="M838.800 510.600Q1012 611.800 1185.300 510.600" fill="none" stroke="#2a2a2a" stroke-width="1"/>
<path d="M973 343.500Q1012 348 1051 343.500" fill="none" stroke="#2a2a2a" stroke-width="1"/>
<path d="M965.800 356L905.200 542.400M1058.300 356L1118.900 542.400" stroke="#7b80c4" stroke-width="0.900" fill="none"/>
<path d="M969.300 338.800L838.800 510.600M1055.400 338.800L1185.300 510.600" stroke="#7c241a" stroke-width="1.500" fill="none"/>
<path d="M970 341C964.500 346 964 354 966.500 356.500C970.500 354 973.500 347 972.500 343M1054.700 341C1060.200 346 1060.700 354 1058.200 356.500C1054.200 354 1051.200 347 1052.200 343" fill="none" stroke="#222" stroke-width="0.900"/>
<path d="M966.500 340.500l3.500-3 0.500 4.500M1058.200 340.500l-3.500-3-0.500 4.500M843.500 507.500l-5 3 5 3M1180.600 507.500l5 3-5 3" fill="none" stroke="#e0392b" stroke-width="1.300"/>
<circle cx="905.200" cy="542.400" r="1.100" fill="#111"/><circle cx="1118.900" cy="542.400" r="1.100" fill="#111"/>
<rect x="997" y="345.500" width="30" height="215.700" fill="url(#pl2)"/>
<rect x="997" y="345.500" width="30" height="9" fill="#d9687b" opacity=".9"/><rect x="997" y="552" width="30" height="9" fill="#d9687b" opacity=".9"/>
<rect x="1022" y="354" width="5" height="198" fill="#8a93ab" opacity=".7"/><rect x="997" y="354" width="3" height="198" fill="#9a93a8" opacity=".6"/>
<path d="M997 345.500H1027M997 561.200H1027" stroke="#111" stroke-width="2.200"/>
</g>
<path d="M707.300 563.300C710 561 714 560.500 716.700 560.700C725 561 730 570 734.300 575C739 570 745 561 753.300 560.700C756 560.500 759 561 761.700 563.300C763 570 765 577 769.300 580.700L830.700 760Q734.300 798.600 639 760L700 580.700C704 577 706 570 707.300 563.300Z" fill="#c8c7ca" fill-opacity=".85" stroke="#7a7a7c" stroke-width="0.900"/>
<path d="M734.300 575C730 570 725 561 716.700 560.700C714 560.500 710 561 707.300 563.300C706 570 704 577 700 580.700L639 760Q686 779 734.300 779.300" fill="none" stroke="#2b2b2b" stroke-width="1"/>
<path d="M734.300 575V779.300" stroke="#17407a" stroke-width="1.500" stroke-dasharray="1.800 1.800"/>
<circle cx="707.300" cy="563.300" r="1.200" fill="#222"/><circle cx="700" cy="580.700" r="1.200" fill="#222"/><circle cx="734.300" cy="575" r="1.200" fill="#222"/><circle cx="639" cy="760" r="1.200" fill="#222"/>
<path d="M983.300 582.300Q1013 584.500 1043.300 582.300C1044 588 1046 592 1050 595L1110 775Q1014 813.600 917.700 775L977.300 595C981 592 983 588 983.300 582.300Z" fill="#c8c7ca" fill-opacity=".85" stroke="#6e6e70" stroke-width="0.900"/>
<path d="M983.300 582.300C983 588 981 592 977.300 595L917.700 775Q965 794 1014 794.300" fill="none" stroke="#2b2b2b" stroke-width="1"/>
<path d="M983.300 582.300Q1013 584.500 1043.300 582.300" fill="none" stroke="#4a57a8" stroke-width="1"/>
<path d="M1014 583.500V794.300" stroke="#17407a" stroke-width="1.500" stroke-dasharray="1.800 1.800"/>
<circle cx="983.300" cy="582.300" r="1.200" fill="#222"/><circle cx="977.300" cy="595" r="1.200" fill="#222"/><circle cx="917.700" cy="775" r="1.200" fill="#222"/><circle cx="1014" cy="794.300" r="1.200" fill="#222"/>
<path d="M805.600 168.900L958.900 198.200M840 216.200L920 224.400M823.300 246.200L906.700 257.800M883.300 263.300L938.900 275.600" stroke="#8394a8" stroke-width="1.100" fill="none"/>
<g transform="translate(0.0,0.0)">
<path d="M744 183.500C738 184 733 187 732 190C729.500 205 729.500 225 732 239.300H744ZM839.500 185.600C846 185.500 851 187.500 852.500 190.500C855.500 205 855.500 225 852.500 239H840Z" fill="#cfcfd2"/>
<path d="M744 183.500C738 184 733 187 732 190C729.500 205 729.500 225 732 239.300M839.500 185.600C846 185.500 851 187.500 852.500 190.500C855.500 205 855.500 225 852.500 239" fill="none" stroke="#7ab8e8" stroke-width="6.5" opacity=".9"/>
<path d="M744 183.500C748 182 752 184 760 190C772 198 780 200.500 788 200.500C800 200.500 815 196 825 190C832 186 836 185 839.500 185.600" fill="none" stroke="#7ab8e8" stroke-width="6" opacity=".6"/>
<clipPath id="cb0"><path d="M744 183.500C748 182 752 184 760 190C772 198 780 200.500 788 200.500C800 200.500 815 196 825 190C832 186 836 185 839.500 185.600L840 239.600H744Z"/></clipPath>
<g clip-path="url(#cb0)">
<rect x="744" y="180" width="96" height="60" fill="#cfcfd2"/>
<rect x="744" y="180" width="96" height="60" fill="url(#pl3)"/>
<rect x="766.0" y="180" width="3.0" height="60" fill="#7f8aa2" opacity=".45"/>
<rect x="791.0" y="180" width="3.0" height="60" fill="#7f8aa2" opacity=".45"/>
<rect x="814.0" y="180" width="3.0" height="60" fill="#7f8aa2" opacity=".45"/>
<path d="M744 183.500C748 182 752 184 760 190C772 198 780 200.500 788 200.500C800 200.500 815 196 825 190C832 186 836 185 839.500 185.600" transform="translate(0,5)" fill="none" stroke="#d56676" stroke-width="9" opacity=".92"/>
<rect x="744" y="231" width="96" height="9" fill="#d56676" opacity=".92"/>
</g>
<path d="M732 190H852.500" stroke="#b58b9a" stroke-width="0.800"/>
<path d="M744 183.500C738 184 733 187 732 190C729.500 205 729.500 225 732 239.300M839.500 185.600C846 185.500 851 187.500 852.500 190.500C855.500 205 855.500 225 852.500 239" fill="none" stroke="#2b5d8e" stroke-width="1.200"/>
<path d="M732 239.300H744M840 239H852.500" stroke="#3cae5c" stroke-width="2"/>
<path d="M744 183.500C748 182 752 184 760 190C772 198 780 200.500 788 200.500C800 200.500 815 196 825 190C832 186 836 185 839.500 185.600" fill="none" stroke="#0d0d0d" stroke-width="2.300"/>
<path d="M744 239.600H840" stroke="#0d0d0d" stroke-width="2"/>
<path d="M842 186l-4 1.500 3 3M742.500 184.500l4 1-2.500 3.200" fill="none" stroke="#e0392b" stroke-width="1.200"/>
</g>
<g transform="translate(176.4,19.4)">
<path d="M744 183.500C738 184 733 187 732 190C729.500 205 729.500 225 732 239.300H744ZM839.500 185.600C846 185.500 851 187.500 852.500 190.500C855.500 205 855.500 225 852.500 239H840Z" fill="#cfcfd2"/>
<path d="M744 183.500C738 184 733 187 732 190C729.500 205 729.500 225 732 239.300M839.500 185.600C846 185.500 851 187.500 852.500 190.500C855.500 205 855.500 225 852.500 239" fill="none" stroke="#7ab8e8" stroke-width="8.0" opacity=".9"/>
<path d="M744 183.500C748 182 752 184 760 190C772 198 780 200.500 788 200.500C800 200.500 815 196 825 190C832 186 836 185 839.500 185.600M732 239.500H852.500" fill="none" stroke="#7ab8e8" stroke-width="7" opacity=".8"/>
<clipPath id="cb1"><path d="M744 183.500C748 182 752 184 760 190C772 198 780 200.500 788 200.500C800 200.500 815 196 825 190C832 186 836 185 839.500 185.600L840 239.600H744Z"/></clipPath>
<g clip-path="url(#cb1)">
<rect x="744" y="180" width="96" height="60" fill="#cfcfd2"/>
<rect x="744" y="180" width="96" height="60" fill="url(#pl3)"/>
<rect x="766.0" y="180" width="3.0" height="60" fill="#7f8aa2" opacity=".45"/>
<rect x="791.0" y="180" width="3.0" height="60" fill="#7f8aa2" opacity=".45"/>
<rect x="814.0" y="180" width="3.0" height="60" fill="#7f8aa2" opacity=".45"/>
<path d="M744 183.500C748 182 752 184 760 190C772 198 780 200.500 788 200.500C800 200.500 815 196 825 190C832 186 836 185 839.500 185.600" transform="translate(0,5)" fill="none" stroke="#d56676" stroke-width="9" opacity=".92"/>
<rect x="744" y="231" width="96" height="9" fill="#d56676" opacity=".92"/>
</g>
<path d="M732 190H852.500" stroke="#b58b9a" stroke-width="0.800"/>
<path d="M744 183.500C738 184 733 187 732 190C729.500 205 729.500 225 732 239.300M839.500 185.600C846 185.500 851 187.500 852.500 190.500C855.500 205 855.500 225 852.500 239" fill="none" stroke="#2b5d8e" stroke-width="1.200"/>
<path d="M732 239.300H744M840 239H852.500" stroke="#3cae5c" stroke-width="2"/>
<path d="M744 183.500C748 182 752 184 760 190C772 198 780 200.500 788 200.500C800 200.500 815 196 825 190C832 186 836 185 839.500 185.600" fill="none" stroke="#0d0d0d" stroke-width="2.300"/>
<path d="M744 239.600H840" stroke="#0d0d0d" stroke-width="2"/>
<path d="M842 186l-4 1.500 3 3M742.500 184.500l4 1-2.500 3.200" fill="none" stroke="#e0392b" stroke-width="1.200"/>
</g>
<path d="M774.400 183.300L780 197.800M804.400 185.600L796.700 198.900" stroke="#333" stroke-width="0.700" fill="none"/>
<g transform="translate(0.0,0.0)">
<path d="M776.500 162C778 155 786 152.500 791 152.500C797 152.500 804 156 805.500 162.500C803 170 797 177 790.500 180C784 177 778.500 170 776.500 162Z" fill="#cfd4d8" stroke="#7ab8e8" stroke-width="7" opacity=".85"/>
<path d="M776.500 162C778 155 786 152.500 791 152.500C797 152.500 804 156 805.500 162.500C803 170 797 177 790.500 180C784 177 778.500 170 776.500 162Z" fill="#cdd2d6" stroke="#2b5d8e" stroke-width="1.300"/>
<path d="M777 163.500H805M780 164C782 171 786 175.500 790.500 177.500C795 175.500 799.500 171 802 164" fill="none" stroke="#2b5d8e" stroke-width="0.900"/>
<path d="M790.700 155.500V161.500M783 158l3.500 3.500M799 158l-3.500 3.500" stroke="#e0392b" stroke-width="1.300" fill="none"/>
</g>
<g transform="translate(183.3,33.3)">
<path d="M776.500 162C778 155 786 152.500 791 152.500C797 152.500 804 156 805.500 162.500C803 170 797 177 790.500 180C784 177 778.500 170 776.500 162Z" fill="#cfd4d8" stroke="#7ab8e8" stroke-width="7" opacity=".85"/>
<path d="M776.500 162C778 155 786 152.500 791 152.500C797 152.500 804 156 805.500 162.500C803 170 797 177 790.500 180C784 177 778.500 170 776.500 162Z" fill="#cdd2d6" stroke="#2b5d8e" stroke-width="1.300"/>
<path d="M777 163.500H805M780 164C782 171 786 175.500 790.500 177.500C795 175.500 799.500 171 802 164" fill="none" stroke="#2b5d8e" stroke-width="0.900"/>
<path d="M790.700 155.500V161.500M783 158l3.500 3.500M799 158l-3.500 3.500" stroke="#e0392b" stroke-width="1.300" fill="none"/>
</g>
<path d="M799.0 245.5H823.3" stroke="#7ab8e8" stroke-width="5.500" opacity=".85"/>
<path d="M799.0 245.5H823.3" stroke="#173a5e" stroke-width="1.600"/>
<path d="M962.2 266.0H987.8" stroke="#7ab8e8" stroke-width="5.500" opacity=".85"/>
<path d="M962.2 266.0H987.8" stroke="#173a5e" stroke-width="1.600"/>
<path d="M884.500 271Q884.500 261 874.500 254.500" fill="none" stroke="#7ab8e8" stroke-width="10" opacity=".8"/>
<path d="M847.500 271.500Q864 284.500 884 270" fill="none" stroke="#4a4030" stroke-width="7.400"/>
<path d="M848 272Q864 284 883.500 270.500" fill="none" stroke="#c9b394" stroke-width="6"/>
<path d="M884.500 272Q884.500 261 874.500 254.500" fill="none" stroke="#3d5a7a" stroke-width="7.200"/>
<path d="M884.500 271.500Q884.500 261.500 875 255" fill="none" stroke="#a8aeb6" stroke-width="5.800"/>
<path d="M864.500 275.500V282.500" stroke="#222" stroke-width="0.800"/>
<path d="M951.500 268Q941 274 940.500 286" fill="none" stroke="#7ab8e8" stroke-width="10" opacity=".8"/>
<path d="M951.500 268Q941 274 940.500 286" fill="none" stroke="#3d5a7a" stroke-width="7.200"/>
<path d="M951 268.500Q941.500 274 941 285.500" fill="none" stroke="#a8aeb6" stroke-width="5.800"/>
<path d="M951.500 268Q948 269.500 946 271.500" fill="none" stroke="#3fae4a" stroke-width="6"/>
<path d="M830.400 295.600L848.900 288.400Q855 296 862.200 295.600Q869.500 296 875.600 288.400L893.300 296.700L888.900 311.100C878 307 868 312 862.200 322.200C856 312 846 307 834.400 310.700Z" fill="#cdced1" stroke="#333" stroke-width="0.900"/>
<path d="M862.200 296V322" stroke="#17407a" stroke-width="1.500" stroke-dasharray="1.600 1.600"/>
<circle cx="830.4" cy="295.6" r="1.100" fill="#222"/>
<circle cx="848.9" cy="288.4" r="1.100" fill="#222"/>
<circle cx="862.2" cy="295.6" r="1.100" fill="#222"/>
<circle cx="875.6" cy="288.4" r="1.100" fill="#222"/>
<circle cx="893.3" cy="296.7" r="1.100" fill="#222"/>
<circle cx="888.9" cy="311.1" r="1.100" fill="#222"/>
<circle cx="862.2" cy="322.2" r="1.100" fill="#222"/>
<circle cx="834.4" cy="310.7" r="1.100" fill="#222"/>
<path d="M835 310.500l5-1.500M888.500 311l-5-1.500" stroke="#e0392b" stroke-width="1.100"/>
<path d="M897.800 298.200L915.600 292.200Q922 298.500 931 298.200Q940 298.500 946.700 293.300L964.400 298.200L961 322.200L931 324.400L901.800 322.700Z" fill="#cdced1" stroke="#555" stroke-width="0.900"/>
<path d="M901.800 322.700L931 324.400L961 322.200" fill="none" stroke="#8a8fc8" stroke-width="1"/>
<path d="M931 298.500V324" stroke="#17407a" stroke-width="1.500" stroke-dasharray="1.600 1.600"/>
<path d="M902 313.700H911M952 312.700H961" stroke="#e0392b" stroke-width="2.600"/>
<circle cx="897.8" cy="298.2" r="1.100" fill="#222"/>
<circle cx="915.6" cy="292.2" r="1.100" fill="#222"/>
<circle cx="931.0" cy="298.2" r="1.100" fill="#222"/>
<circle cx="964.4" cy="298.2" r="1.100" fill="#222"/>
<circle cx="961.0" cy="322.2" r="1.100" fill="#222"/>
<circle cx="931.0" cy="324.4" r="1.100" fill="#222"/>
<circle cx="901.8" cy="322.7" r="1.100" fill="#222"/>
<g transform="translate(-1.200,0)">
</g><g>
<rect x="596" y="65.5" width="22" height="22" fill="#d3d7d9" stroke="#dfe2e4" stroke-width="1"/>
<rect x="596" y="90.5" width="22" height="22" fill="#d3d7d9" stroke="#dfe2e4" stroke-width="1"/>
<rect x="596" y="116.5" width="22" height="22" fill="#d3d7d9" stroke="#dfe2e4" stroke-width="1"/>
<rect x="596" y="141.0" width="22" height="22" fill="#d3d7d9" stroke="#dfe2e4" stroke-width="1"/>
<rect x="596" y="166.5" width="22" height="22" fill="#d3d7d9" stroke="#dfe2e4" stroke-width="1"/>
</g><g transform="translate(-1,0)">
<path d="M601 69l13 12" stroke="#1d1d1f" stroke-width="2.600"/><path d="M600 68l4 3" stroke="#e8e8e8" stroke-width="1"/><ellipse cx="603.500" cy="82" rx="3.800" ry="2" fill="#3a3a3c"/><circle cx="603.500" cy="82" r="1" fill="#ddd"/>
<path d="M602 95l3.500-2c1 1 4 1 5 0l3.500 2 2 3-2.500 1.500-1-1v7h-9v-7l-1 1-2.500-1.500z" fill="#fafafa" stroke="#c0c3c5" stroke-width="0.500"/><ellipse cx="603.500" cy="107.500" rx="3.800" ry="2" fill="#3a3a3c"/><circle cx="603.500" cy="107.500" r="1" fill="#ddd"/>
<circle cx="609" cy="126.500" r="7" fill="#1c3a4e"/><circle cx="609" cy="126.500" r="5.800" fill="#23648a"/><text x="609" y="130.500" font-family="Liberation Serif,serif" font-style="italic" font-weight="bold" font-size="11" fill="#7fd0f4" text-anchor="middle">i</text><ellipse cx="603" cy="134" rx="3.500" ry="1.800" fill="#3a3a3c"/>
<path d="M603 146l10-1.500 2 11-10 3z" fill="#9a9da0" stroke="#7d8083" stroke-width="0.600"/><path d="M601 148l9-1 1.500 10-9 2.500z" fill="#b5b8bb" stroke="#8a8d90" stroke-width="0.600"/>
<path d="M603 171l3.500-2c1 1 4 1 5 0l3.500 2 2 3-2.500 1.500-1-1v8h-9v-8l-1 1-2.500-1.500z" fill="#e4e7e9" stroke="#b4b7b9" stroke-width="0.500"/><rect x="600.500" y="179.500" width="6" height="5.500" fill="#3a3a3c"/><path d="M601.800 179.500v-2a1.800 1.800 0 0 1 3.600 0v2" fill="none" stroke="#3a3a3c" stroke-width="1.100"/>
</g>
</svg>
<div class="abs" style="left:1232px;top:55px;width:64px;height:823px;background:#2b2e31"></div>
<div class="abs" style="left:1232px;top:35px;width:64px;height:20px;background:#1a1b1d"></div>
<div class="abs" style="left:1262px;top:57px;width:1px;height:815px;background:#232527"></div>
<svg class="abs" style="left:1279px;top:39px" width="11" height="10"><path d="M1 3.500h5.500v5.500h-5.500zM5 1h5v4M10 1l-4 4" fill="none" stroke="#aaa" stroke-width="1"/></svg>
<svg class="abs" style="left:1232px;top:55px" width="64" height="823" viewBox="1232 55 64 823">
<rect x="1233" y="57" width="28" height="30" fill="#1f2123"/>
<path d="M1234.0 64.0l0 6.500 1.800-1.600 2.600-.3z" fill="#55585b"/>
<path d="M1240 86l15-14v14z" fill="#25a5ea"/><path d="M1240 86l15-14v3z" fill="#5cc6fa"/>
<path d="M1234.0 93.0l0 6.500 1.800-1.600 2.600-.3z" fill="#9a9da0"/><path d="M1241 110.0l11-10v10z" fill="none" stroke="#8e9194" stroke-width="1.200"/><circle cx="1241.0" cy="110.0" r="1.4" fill="#e0e0e0"/><circle cx="1252.0" cy="100.0" r="1.4" fill="#e0e0e0"/><circle cx="1252.0" cy="110.0" r="1.4" fill="#e0e0e0"/><path d="M1259 111.0l-3.500 3.500h3.500z" fill="#55585b"/>
<path d="M1234.0 121.0l0 6.500 1.800-1.600 2.600-.3z" fill="#9a9da0"/><path d="M1241 139c6-2 4-12 12-13" fill="none" stroke="#8e9194" stroke-width="1.300"/><circle cx="1241.0" cy="139.0" r="1.4" fill="#e0e0e0"/><circle cx="1253.0" cy="126.0" r="1.4" fill="#e0e0e0"/>
<path d="M1234.0 148.0l0 6.500 1.800-1.600 2.600-.3z" fill="#9a9da0"/><path d="M1241 167c5-1 5-6 8-8" fill="none" stroke="#8e9194" stroke-width="1.300"/><path d="M1249 159l6-5" stroke="#8e9194" stroke-width="1" stroke-dasharray="1.500 1"/><circle cx="1241.0" cy="167.0" r="1.4" fill="#e0e0e0"/><circle cx="1249.0" cy="159.0" r="1.4" fill="#e0e0e0"/><circle cx="1255.0" cy="153.0" r="1.4" fill="#e0e0e0"/>
<path d="M1238 196l18-14" stroke="#8e9194" stroke-width="1.300"/><circle cx="1238.0" cy="196.0" r="1.4" fill="#e0e0e0"/><circle cx="1256.0" cy="182.0" r="1.4" fill="#e0e0e0"/><circle cx="1247" cy="189" r="3" fill="#b2b4b6"/>
<path d="M1234.0 208.0l0 6.500 1.800-1.600 2.600-.3z" fill="#9a9da0"/><path d="M1240 226l14-13M1246 214l10 11" stroke="#8e9194" stroke-width="1.200"/><circle cx="1248.0" cy="219.0" r="1.6" fill="#e0e0e0"/>
<path d="M1234.0 236.0l0 6.500 1.800-1.600 2.600-.3z" fill="#9a9da0"/><path d="M1241 254h11v-11" fill="none" stroke="#8e9194" stroke-width="1.200" stroke-dasharray="1.500 1.200"/><circle cx="1241.0" cy="254.0" r="1.4" fill="#e0e0e0"/><circle cx="1252.0" cy="243.0" r="1.4" fill="#e0e0e0"/><circle cx="1252.0" cy="254.0" r="1.4" fill="#e0e0e0"/><path d="M1259 256l-3.500 3.500h3.500z" fill="#55585b"/>
<rect x="1238" y="267" width="11" height="14" fill="#55585b"/><path d="M1247 268l10 9-11 4z" fill="none" stroke="#b2b4b6" stroke-width="1.200"/><circle cx="1257.0" cy="277.0" r="1.4" fill="#e0e0e0"/><circle cx="1246.0" cy="281.0" r="1.4" fill="#e0e0e0"/><path d="M1259 284l-3.500 3.500h3.500z" fill="#55585b"/>
<path d="M1239 296h8c2 5 4 7 8 8v8h-16z" fill="#8e9194"/><path d="M1259 312l-3.500 3.500h3.500z" fill="#55585b"/>
<rect x="1238" y="324" width="18" height="16" fill="#8e9194"/><path d="M1241 337v-8h5c1 3 3 4.500 6 5v3z" fill="#b2b4b6" stroke="#555" stroke-width="0.600"/><path d="M1259 340l-3.500 3.500h3.500z" fill="#55585b"/>
<rect x="1238" y="352" width="18" height="16" fill="#8e9194"/><circle cx="1241.0" cy="356.0" r="0.8" fill="#e8e8e8"/><circle cx="1241.0" cy="360.0" r="0.8" fill="#e8e8e8"/><circle cx="1244.0" cy="358.0" r="0.8" fill="#e8e8e8"/><circle cx="1244.0" cy="362.0" r="0.8" fill="#e8e8e8"/><circle cx="1247.0" cy="356.0" r="0.8" fill="#e8e8e8"/><circle cx="1247.0" cy="360.0" r="0.8" fill="#e8e8e8"/><circle cx="1250.0" cy="358.0" r="0.8" fill="#e8e8e8"/><circle cx="1250.0" cy="362.0" r="0.8" fill="#e8e8e8"/><circle cx="1253.0" cy="356.0" r="0.8" fill="#e8e8e8"/><circle cx="1253.0" cy="360.0" r="0.8" fill="#e8e8e8"/><path d="M1259 368l-3.500 3.500h3.500z" fill="#55585b"/>
<rect x="1238" y="382" width="9" height="10" fill="#1c1e20" stroke="#8e9194" stroke-width="1" stroke-dasharray="1.500 1"/><path d="M1246 378h10v8l-5 5-5-5z" fill="#8e9194"/>
<path d="M1234.0 404.0l0 6.500 1.800-1.600 2.600-.3z" fill="#9a9da0"/><path d="M1242 411h3l2 2 2-2h3v4l-1.500 2 1.500 2v7h-10z" fill="#55585b" stroke="#8e9194" stroke-width="1"/>
<rect x="1235.0" y="436.0" width="24.0" height="1" fill="#3a3d40"/><rect x="1235.0" y="435.0" width="24.0" height="1" fill="#202224"/>
<rect x="1239" y="444" width="8" height="13" fill="#8e9194"/><rect x="1248" y="446" width="7" height="11" fill="#55585b"/>
<rect x="1235.0" y="470.0" width="24.0" height="1" fill="#3a3d40"/><rect x="1235.0" y="469.0" width="24.0" height="1" fill="#202224"/>
<path d="M1234.0 478.0l0 6.500 1.800-1.600 2.600-.3z" fill="#9a9da0"/><path d="M1243 482v18M1240 482h6M1240 500h6" stroke="#b2b4b6" stroke-width="1.200"/><rect x="1248" y="483" width="6" height="16" fill="#8e9194"/><path d="M1249 486h4M1249 489h4M1249 492h4M1249 495h4" stroke="#333" stroke-width="0.700"/>
<path d="M1238 516h18M1238 513v6M1256 513v6" stroke="#b2b4b6" stroke-width="1.200"/><rect x="1239" y="520" width="16" height="5" fill="#8e9194"/>
<rect x="1235.0" y="537.0" width="24.0" height="1" fill="#3a3d40"/><rect x="1235.0" y="536.0" width="24.0" height="1" fill="#202224"/>
<path d="M1234.0 546.0l0 6.500 1.800-1.600 2.600-.3z" fill="#9a9da0"/><text x="1240" y="566" font-family="Liberation Serif,serif" font-size="17" fill="#b2b4b6">A</text>
<text x="1238" y="594" font-family="Liberation Serif,serif" font-size="19" fill="#b2b4b6">A</text>
<path d="M1234.0 604.0l0 6.500 1.800-1.600 2.600-.3z" fill="#9a9da0"/><path d="M1240 626l15-15" stroke="#b2b4b6" stroke-width="1.200"/><path d="M1242 613a8 8 0 0 1 11 11" fill="none" stroke="#8e9194" stroke-width="1"/><circle cx="1240.0" cy="626.0" r="1.4" fill="#e0e0e0"/><circle cx="1255.0" cy="611.0" r="1.4" fill="#e0e0e0"/>
<rect x="1235.0" y="636.0" width="24.0" height="1" fill="#3a3d40"/><rect x="1235.0" y="635.0" width="24.0" height="1" fill="#202224"/>
<rect x="1238" y="643" width="16" height="15" fill="none" stroke="#8e9194" stroke-width="1"/><path d="M1242 643v15M1246 643v15M1250 643v15" stroke="#8e9194" stroke-width="1.200"/>
<path d="M1238 673l5 2v14l-5-2zM1244 675l5-2v14l-5 2zM1250 673l5 2v14l-5-2z" fill="#b2b4b6"/>
<path d="M1238 716v-8l3-1v9zM1243 716v-10l3-1v11zM1248 716v-12l3-1v13z" fill="#b2b4b6"/><path d="M1246 702h8v-2l3 3-3 3v-2h-8z" fill="#8e9194"/>
<rect x="1235.0" y="729.0" width="24.0" height="1" fill="#3a3d40"/><rect x="1235.0" y="728.0" width="24.0" height="1" fill="#202224"/>
<path d="M1234.0 736.0l0 6.500 1.800-1.600 2.600-.3z" fill="#9a9da0"/><path d="M1243 741l5-4 6 4v14h-11z" fill="#8e9194"/><path d="M1248 746l3-2 4 3v8h-7z" fill="#b2b4b6"/>
<circle cx="1246" cy="766" r="2.300" fill="#8e9194"/><path d="M1243 770h6l1 6-2 6h-1.500l-.5-5-.5 5h-1.500l-2-6z" fill="#8e9194"/><circle cx="1250" cy="772" r="2.500" fill="#b2b4b6"/>
<path d="M1264.0 63.0l0 6.500 1.800-1.600 2.600-.3z" fill="#9a9da0"/><path d="M1270.0 70.0h12v11h-12v-3h7v-3h-5v-2h-2z" fill="#b2b4b6"/><rect x="1277.5" y="72.0" width="2.500" height="2.500" fill="#2b2e31"/>
<path d="M1269.0 96.0h12v11h-12v-3h7v-3h-5v-2h-2z" fill="#55585b"/><rect x="1276.5" y="98.0" width="2.500" height="2.500" fill="#2b2e31"/><path d="M1268 114h10" stroke="#b2b4b6" stroke-width="1" stroke-dasharray="1.500 1.200"/><circle cx="1268.0" cy="114.0" r="1.3" fill="#e0e0e0"/><circle cx="1280.0" cy="114.0" r="1.3" fill="#e0e0e0"/><path d="M1290 114l-3.500 3.500h3.500z" fill="#55585b"/>
<path d="M1269.0 124.0h12v11h-12v-3h7v-3h-5v-2h-2z" fill="#55585b"/><rect x="1276.5" y="126.0" width="2.500" height="2.500" fill="#2b2e31"/><path d="M1267 141c4-4 7 3 12-1" fill="none" stroke="#b2b4b6" stroke-width="1.400"/><circle cx="1273.0" cy="140.0" r="1.3" fill="#e0e0e0"/><path d="M1290 141l-3.500 3.500h3.500z" fill="#55585b"/>
<circle cx="1268" cy="153" r="2.800" fill="none" stroke="#8e9194" stroke-width="1"/><path d="M1272.0 155.0h12v11h-12v-3h7v-3h-5v-2h-2z" fill="#b2b4b6"/><rect x="1279.5" y="157.0" width="2.500" height="2.500" fill="#2b2e31"/>
<path d="M1266 200h21v-4c0-5-4-8-9-8h-5l-1 3h5c3 0 5 2 5 4h-15z" fill="#8e9194"/><rect x="1265" y="201.500" width="23" height="1.500" fill="#55585b"/><circle cx="1282" cy="196" r="1" fill="#333"/>
<rect x="1265.0" y="216.0" width="27.0" height="1" fill="#3a3d40"/><rect x="1265.0" y="215.0" width="27.0" height="1" fill="#202224"/>
<path d="M1264.0 223.0l0 6.500 1.800-1.600 2.600-.3z" fill="#9a9da0"/><path transform="translate(1279.0,236.0) scale(0.90)" d="M-8-4.500l4.500-2.500c1.500 1.500 5.500 1.500 7 0l4.500 2.500-2 3.800-2.200-1v8.700h-7.600v-8.700l-2.200 1z" fill="#8e9194"/>
<rect x="1265.0" y="256.0" width="27.0" height="1" fill="#3a3d40"/><rect x="1265.0" y="255.0" width="27.0" height="1" fill="#202224"/>
<path d="M1264.0 259.0l0 6.500 1.800-1.600 2.600-.3z" fill="#9a9da0"/><path d="M1272 266l3 2 4-3 4 1v9l-3 3h-7l-2-4z" fill="#8e9194"/><rect x="1275.0" y="270.0" width="2" height="2" fill="#e6e6e6"/><rect x="1275.0" y="272.0" width="2" height="2" fill="#3a3d40"/><rect x="1275.0" y="274.0" width="2" height="2" fill="#e6e6e6"/><rect x="1277.0" y="270.0" width="2" height="2" fill="#3a3d40"/><rect x="1277.0" y="272.0" width="2" height="2" fill="#e6e6e6"/><rect x="1277.0" y="274.0" width="2" height="2" fill="#3a3d40"/><rect x="1279.0" y="270.0" width="2" height="2" fill="#e6e6e6"/><rect x="1279.0" y="272.0" width="2" height="2" fill="#3a3d40"/><rect x="1279.0" y="274.0" width="2" height="2" fill="#e6e6e6"/>
<path d="M1264.0 289.0l0 6.500 1.800-1.600 2.600-.3z" fill="#9a9da0"/><path transform="translate(1279.0,301.0) scale(0.85)" d="M-8-4.500l4.500-2.500c1.500 1.500 5.500 1.500 7 0l4.500 2.500-2 3.800-2.200-1v8.700h-7.600v-8.700l-2.200 1z" fill="#8e9194"/><rect x="1276.0" y="300.0" width="2" height="2" fill="#e6e6e6"/><rect x="1276.0" y="302.0" width="2" height="2" fill="#3a3d40"/><rect x="1276.0" y="304.0" width="2" height="2" fill="#e6e6e6"/><rect x="1278.0" y="300.0" width="2" height="2" fill="#3a3d40"/><rect x="1278.0" y="302.0" width="2" height="2" fill="#e6e6e6"/><rect x="1278.0" y="304.0" width="2" height="2" fill="#3a3d40"/><rect x="1280.0" y="300.0" width="2" height="2" fill="#e6e6e6"/><rect x="1280.0" y="302.0" width="2" height="2" fill="#3a3d40"/><rect x="1280.0" y="304.0" width="2" height="2" fill="#e6e6e6"/>
<path transform="translate(1278.0,328.0) scale(1.10)" d="M-8-4.500l4.500-2.500c1.500 1.500 5.500 1.500 7 0l4.500 2.500-2 3.800-2.200-1v8.700h-7.600v-8.700l-2.200 1z" fill="#8e9194"/><rect x="1275.0" y="327.0" width="2" height="2" fill="#e6e6e6"/><rect x="1275.0" y="329.0" width="2" height="2" fill="#3a3d40"/><rect x="1275.0" y="331.0" width="2" height="2" fill="#e6e6e6"/><rect x="1277.0" y="327.0" width="2" height="2" fill="#3a3d40"/><rect x="1277.0" y="329.0" width="2" height="2" fill="#e6e6e6"/><rect x="1277.0" y="331.0" width="2" height="2" fill="#3a3d40"/><rect x="1279.0" y="327.0" width="2" height="2" fill="#e6e6e6"/><rect x="1279.0" y="329.0" width="2" height="2" fill="#3a3d40"/><rect x="1279.0" y="331.0" width="2" height="2" fill="#e6e6e6"/>
<rect x="1265.0" y="346.0" width="27.0" height="1" fill="#3a3d40"/><rect x="1265.0" y="345.0" width="27.0" height="1" fill="#202224"/>
<path d="M1264.0 352.0l0 6.500 1.800-1.600 2.600-.3z" fill="#9a9da0"/><path d="M1270 372l17-16" stroke="#b2b4b6" stroke-width="2" stroke-dasharray="3 1.500"/>
<path d="M1266 387h22" stroke="#b2b4b6" stroke-width="2.200" stroke-dasharray="4 1.500"/><path d="M1266 395h22" stroke="#8e9194" stroke-width="1"/><circle cx="1266.0" cy="395.0" r="1.2" fill="#8e9194"/><circle cx="1288.0" cy="395.0" r="1.2" fill="#8e9194"/>
<path d="M1266 417c5-6 8 5 12 0s6-3 10-1" fill="none" stroke="#b2b4b6" stroke-width="2" stroke-dasharray="3 1.500"/><path d="M1266 424c5-6 8 5 12 0s6-3 10-1" fill="none" stroke="#8e9194" stroke-width="1"/>
<path d="M1270.0 441.0h12v11h-12v-3h7v-3h-5v-2h-2z" fill="#55585b"/><rect x="1277.5" y="443.0" width="2.500" height="2.500" fill="#2b2e31"/><path d="M1266 458c5-4 8 3 12 0s6-2 10 0" fill="none" stroke="#b2b4b6" stroke-width="1.200"/>
<rect x="1265.0" y="470.0" width="27.0" height="1" fill="#3a3d40"/><rect x="1265.0" y="469.0" width="27.0" height="1" fill="#202224"/>
<path d="M1264.0 476.0l0 6.500 1.800-1.600 2.600-.3z" fill="#9a9da0"/><path d="M1283 478v18" stroke="#8e9194" stroke-width="1"/><path d="M1279 481l5 1.500-5 1.500 5 1.500-5 1.500 5 1.500-5 1.500 5 1.500" fill="none" stroke="#b2b4b6" stroke-width="1"/><circle cx="1283.0" cy="478.0" r="1.2" fill="#e0e0e0"/><circle cx="1283.0" cy="496.0" r="1.2" fill="#e0e0e0"/>
<path d="M1268 520.0l1.500-5 1.500 5 1.500-5 1.500 5 1.500-5 1.500 5 1.500-5 1.500 5 1.500-5 1.500 5" fill="none" stroke="#b2b4b6" stroke-width="1"/><path d="M1266 523h22" stroke="#8e9194" stroke-width="0.900"/><circle cx="1266.0" cy="523.0" r="1.1" fill="#e0e0e0"/><circle cx="1288.0" cy="523.0" r="1.1" fill="#e0e0e0"/>
<path d="M1268 548.0l1.500-5 1.500 5 1.500-5 1.500 5 1.500-5 1.500 5 1.500-5 1.500 5 1.500-5 1.500 5" fill="none" stroke="#b2b4b6" stroke-width="1"/><path d="M1266 553c6-4 10 4 22-1" fill="none" stroke="#8e9194" stroke-width="1"/>
<path d="M1271.0 565.0h12v11h-12v-3h7v-3h-5v-2h-2z" fill="#55585b"/><rect x="1278.5" y="567.0" width="2.500" height="2.500" fill="#2b2e31"/><path d="M1268 580.0l1.500-5 1.500 5 1.500-5 1.500 5 1.500-5 1.500 5 1.500-5 1.500 5 1.500-5 1.500 5" fill="none" stroke="#b2b4b6" stroke-width="1"/>
<rect x="1265.0" y="592.0" width="27.0" height="1" fill="#3a3d40"/><rect x="1265.0" y="591.0" width="27.0" height="1" fill="#202224"/>
<circle cx="1272" cy="613" r="4.500" fill="#b2b4b6"/><circle cx="1272" cy="613" r="1.600" fill="#2b2e31"/><circle cx="1281" cy="608" r="3.800" fill="#b2b4b6"/><circle cx="1281" cy="608" r="1.300" fill="#2b2e31"/><rect x="1268" y="604" width="5" height="4" fill="#8e9194"/>
<rect x="1265.0" y="629.0" width="27.0" height="1" fill="#3a3d40"/><rect x="1265.0" y="628.0" width="27.0" height="1" fill="#202224"/>
<path d="M1264.0 636.0l0 6.500 1.800-1.600 2.600-.3z" fill="#9a9da0"/><rect x="1273" y="641" width="14" height="14" fill="none" stroke="#b2b4b6" stroke-width="1.600" stroke-dasharray="2 1.500"/><rect x="1277" y="645" width="6" height="6" fill="#8e9194"/>
</svg>
<!-- right panel -->
<div class="abs" style="left:1296px;top:37px;width:304px;height:841px;background:#2b2e31"></div>
<div class="abs" style="left:1296px;top:37px;width:2px;height:841px;background:#232527"></div>
<div class="abs" style="left:1298px;top:37px;width:302px;height:18px;background:#1e2022"></div>
<svg class="abs" style="left:1298px;top:40px" width="9" height="9"><path d="M0.500 3h4V0.500L8.500 4.500 4.500 8.500V6h-4z" fill="#b5b5b5"/></svg>
<div class="t" style="left:1298px;width:298px;text-align:center;top:39px;color:#dcdcdc;font-size:11.500px">Object Browser</div>
<svg class="abs" style="left:1589px;top:39px" width="11" height="10"><path d="M1 3.500h5.500v5.500h-5.500zM5 1h5v4M10 1l-4 4" fill="none" stroke="#aaa" stroke-width="1"/></svg>
<!-- tabs -->
<div class="abs" style="left:1298px;top:55px;width:302px;height:16px;background:#232629"></div>
<div class="abs" style="left:1346px;top:54px;width:44px;height:17px;background:#33373a"></div>
<div class="t" style="left:1307px;top:56px;font-size:11.500px;color:#e2e2e2">Scene</div>
<div class="t" style="left:1355px;top:56px;font-size:11.500px;color:#e2e2e2">Fabric</div>
<div class="t" style="left:1399px;top:56px;font-size:11.500px;color:#e2e2e2">Button</div>
<div class="t" style="left:1451px;top:56px;font-size:11.500px;color:#e2e2e2">Buttonhole</div>
<div class="t" style="left:1523px;top:56px;font-size:11.500px;color:#e2e2e2">Topstitch</div>
<svg class="abs" style="left:1576px;top:59px" width="24" height="8"><path d="M6 0.500v6L2.500 3.500zM16 0.500v6l3.500-3z" fill="#777"/></svg>
<!-- buttons -->
<div class="abs" style="left:1429px;top:85px;width:51px;height:19px;background:#2f3235;border:1px solid #26282a"></div>
<div class="abs" style="left:1482px;top:85px;width:55px;height:19px;background:#2f3235;border:1px solid #26282a"></div>
<div class="abs" style="left:1539px;top:85px;width:61px;height:19px;background:#2f3235;border:1px solid #26282a"></div>
<div class="t" style="left:1437px;top:87px;font-size:11.500px;color:#dcdcdc"><span style="color:#9a9a9a">+</span>&nbsp; Add</div>
<div class="abs" style="left:1490px;top:89px;width:9px;height:9px;background:#46494c"></div>
<div class="t" style="left:1505px;top:87px;font-size:11.500px;color:#4d5053">Copy</div>
<div class="abs" style="left:1547px;top:91px;width:7px;height:7px;border:1px solid #46494c"></div>
<div class="t" style="left:1562px;top:87px;font-size:11.500px;color:#4d5053">Assign</div>
<!-- list -->
<div class="abs" style="left:1308px;top:110px;width:284px;height:1px;background:#35383b"></div>
<div class="abs" style="left:1339px;top:115px;width:32px;height:33px;background:#bdb8bf"></div>
<div class="t" style="left:1380px;top:124px;font-size:11.500px;color:#e2e2e2">Outer</div>
<div class="abs" style="left:1312px;top:150px;width:280px;height:1px;background:#35383b"></div>
<svg class="abs" style="left:1314px;top:163px" width="17" height="14"><path d="M2 7l4.500 4.500L14.500 2.500" fill="none" stroke="#3a9fe2" stroke-width="2.800"/></svg>
<div class="abs" style="left:1339px;top:155px;width:32px;height:33px;background:#bdb8bf"></div>
<div class="t" style="left:1380px;top:164px;font-size:11.500px;color:#e2e2e2">Inner charmeuse</div>
<div class="abs" style="left:1312px;top:190px;width:280px;height:1px;background:#35383b"></div>
<svg class="abs" style="left:1339px;top:195px" width="32" height="33"><defs><filter id="nz" x="0" y="0" width="100%" height="100%"><feTurbulence type="fractalNoise" baseFrequency="0.900" numOctaves="2" seed="3"/><feColorMatrix type="matrix" values="0 0 0 0 0.550  0 0 0 0 0.550  0 0 0 0 0.570  0.900 0.900 0.900 0 -0.900"/></filter></defs><rect width="32" height="33" fill="#6a696f"/><rect width="32" height="33" filter="url(#nz)" opacity="0.600"/></svg>
<div class="t" style="left:1380px;top:204px;font-size:11.500px;color:#e2e2e2">Lace charmeuse</div>
<div class="abs" style="left:1312px;top:229px;width:280px;height:1px;background:#35383b"></div>
<!-- property editor -->
<div class="abs" style="left:1296px;top:453px;width:304px;height:3px;background:#232527"></div>
<div class="abs" style="left:1298px;top:460px;width:302px;height:18px;background:#1e2022"></div>
<svg class="abs" style="left:1298px;top:463px" width="9" height="9"><path d="M0.500 3h4V0.500L8.500 4.500 4.500 8.500V6h-4z" fill="#b5b5b5"/></svg>
<div class="t" style="left:1298px;width:298px;text-align:center;top:462px;color:#dcdcdc;font-size:11.500px">Property Editor</div>
<svg class="abs" style="left:1589px;top:462px" width="11" height="10"><path d="M1 3.500h5.500v5.500h-5.500zM5 1h5v4M10 1l-4 4" fill="none" stroke="#aaa" stroke-width="1"/></svg>

<div class="abs" style="left:1411px;top:744px;width:186px;height:136px;background:#2b2e31;border:1px solid #222426"></div>
<div class="abs" style="left:1412px;top:745px;width:184px;height:21px;background:#202224"></div>
<div class="t" style="left:1412px;width:151px;text-align:center;top:748px;font-size:11.500px;color:#e2e2e2">Style Line</div>
<svg class="abs" style="left:1567px;top:750px" width="9" height="9"><path d="M1 1h5L4.500 2.500 8 6 6 8 2.500 4.500 1 6z" fill="#c0c0c0"/></svg>
<svg class="abs" style="left:1582px;top:750px" width="9" height="9"><path d="M1 1l7 7M8 1l-7 7" stroke="#d0d0d0" stroke-width="1.600"/></svg>
<div class="abs" style="left:1420px;top:776px;width:167px;height:95px;background:#282b2e;border:1px solid #1f2123"></div>
<div class="t" style="left:1430px;top:787px;font-size:11.500px;color:#e6e6e6">Thickness</div>
<div class="abs" style="left:1481px;top:784px;width:55px;height:19px;background:#1f2225;border:1px solid #2e3134"></div>
<div class="abs" style="left:1483px;top:788px;width:7px;height:12px;background:#4a86c8"></div>
<div class="t" style="left:1484px;top:787px;font-size:11.500px;color:#fff">1</div>
<div class="abs" style="left:1537px;top:785px;width:11px;height:17px;background:#33363a"></div>
<svg class="abs" style="left:1537px;top:785px" width="11" height="17"><path d="M2.500 6.500h6L5.500 2zM2.500 10.500h6L5.500 15z" fill="#5d6064"/></svg>
<div class="t" style="left:1554px;top:787px;font-size:11.500px;color:#e6e6e6">Pixels</div>
<div class="t" style="left:1430px;top:811px;font-size:11.500px;color:#e6e6e6">Color</div>
<div class="abs" style="left:1481px;top:809px;width:68px;height:17px;background:#000"></div>
<div class="abs" style="left:1430px;top:833px;width:10px;height:10px;background:#6b6e71"></div>
<div class="t" style="left:1446px;top:831px;font-size:11.500px;color:#e6e6e6">Show Silhouette</div>
<div class="abs" style="left:1430px;top:851px;width:10px;height:10px;background:#8fb4cc"></div>
<svg class="abs" style="left:1430px;top:851px" width="10" height="10"><path d="M1.500 5l2.500 2.500L8.500 2.500" fill="none" stroke="#fff" stroke-width="1.600"/></svg>
<div class="t" style="left:1446px;top:849px;font-size:11.500px;color:#e6e6e6">Show on Internal Lines</div>

<div class="t" style="left:-2px;top:882px;font-size:9px;color:#c8c8c8">284 (r29975)</div>
<div class="abs" style="left:1487px;top:884px;width:16px;height:12px;border:1px solid #4b4e51"></div>
<div class="abs" style="left:1494px;top:884px;width:1px;height:12px;background:#4b4e51"></div>
<div class="abs" style="left:1514px;top:884px;width:17px;height:12px;border:1px solid #4b4e51"></div>
<div class="t" style="left:1514px;width:17px;text-align:center;top:883px;font-size:8px;font-weight:bold;color:#4b4e51">3D</div>
<div class="abs" style="left:1541px;top:884px;width:17px;height:12px;border:1px solid #4b4e51"></div>
<div class="t" style="left:1541px;width:17px;text-align:center;top:883px;font-size:8px;font-weight:bold;color:#4b4e51">2D</div>
<div class="abs" style="left:1571px;top:880px;width:1px;height:18px;background:#26282a"></div>
<svg class="abs" style="left:1580px;top:884px" width="12" height="12"><path d="M9 3.500A4 4 0 1 0 10 7" fill="none" stroke="#5a5d60" stroke-width="1.800"/><path d="M6.500 1h4.500v4.500z" fill="#5a5d60"/></svg>

</div>
</body></html>
